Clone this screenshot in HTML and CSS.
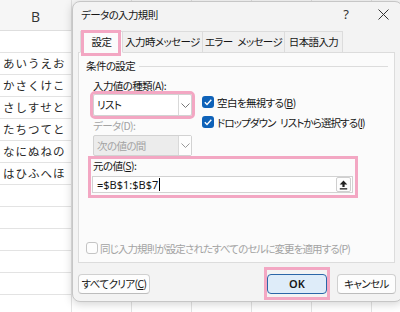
FILE: index.html
```html
<!DOCTYPE html>
<html lang="ja">
<head>
<meta charset="utf-8">
<title>データの入力規則</title>
<link rel="stylesheet" href="styles.css">
</head>
<body>
<div class="sheet">
  <div class="row head"><div class="cell colb">B</div><div class="cell"></div><div class="cell"></div><div class="cell"></div><div class="cell"></div><div class="cell"></div><div class="cell"></div></div>
  <div class="row"><div class="cell colb"></div><div class="cell"></div><div class="cell"></div><div class="cell"></div><div class="cell"></div><div class="cell"></div><div class="cell"></div></div>
  <div class="row"><div class="cell colb">あいうえお</div><div class="cell"></div><div class="cell"></div><div class="cell"></div><div class="cell"></div><div class="cell"></div><div class="cell"></div></div>
  <div class="row"><div class="cell colb">かさくけこ</div><div class="cell"></div><div class="cell"></div><div class="cell"></div><div class="cell"></div><div class="cell"></div><div class="cell"></div></div>
  <div class="row"><div class="cell colb">さしすせと</div><div class="cell"></div><div class="cell"></div><div class="cell"></div><div class="cell"></div><div class="cell"></div><div class="cell"></div></div>
  <div class="row"><div class="cell colb">たちつてと</div><div class="cell"></div><div class="cell"></div><div class="cell"></div><div class="cell"></div><div class="cell"></div><div class="cell"></div></div>
  <div class="row"><div class="cell colb">なにぬねの</div><div class="cell"></div><div class="cell"></div><div class="cell"></div><div class="cell"></div><div class="cell"></div><div class="cell"></div></div>
  <div class="row"><div class="cell colb">はひふへほ</div><div class="cell"></div><div class="cell"></div><div class="cell"></div><div class="cell"></div><div class="cell"></div><div class="cell"></div></div>
  <div class="row"><div class="cell colb"></div><div class="cell"></div><div class="cell"></div><div class="cell"></div><div class="cell"></div><div class="cell"></div><div class="cell"></div></div>
  <div class="row"><div class="cell colb"></div><div class="cell"></div><div class="cell"></div><div class="cell"></div><div class="cell"></div><div class="cell"></div><div class="cell"></div></div>
  <div class="row"><div class="cell colb"></div><div class="cell"></div><div class="cell"></div><div class="cell"></div><div class="cell"></div><div class="cell"></div><div class="cell"></div></div>
  <div class="row"><div class="cell colb"></div><div class="cell"></div><div class="cell"></div><div class="cell"></div><div class="cell"></div><div class="cell"></div><div class="cell"></div></div>
  <div class="row"><div class="cell colb"></div><div class="cell"></div><div class="cell"></div><div class="cell"></div><div class="cell"></div><div class="cell"></div><div class="cell"></div></div>
  <div class="row"><div class="cell colb"></div><div class="cell"></div><div class="cell"></div><div class="cell"></div><div class="cell"></div><div class="cell"></div><div class="cell"></div></div>
</div>

<div class="dialog">
  <div class="titlebar">
    <span class="title">データの入力規則</span>
    <span class="help">?</span>
    <span class="close"><svg width="11" height="11" viewBox="0 0 11 11"><path d="M0.5 0.5 L10.5 10.5 M10.5 0.5 L0.5 10.5" stroke="#333" stroke-width="1" fill="none"/></svg></span>
  </div>
  <div class="tabs">
    <div class="tab active tab-settings">設定</div>
    <div class="tab tab-input">入力時メッセージ</div>
    <div class="tab tab-error">エラー メッセージ</div>
    <div class="tab tab-ime">日本語入力</div>
  </div>
  <div class="panel">
    <div class="group"><span class="group-label">条件の設定</span><span class="group-line"></span></div>
    <div class="fields">
      <div class="left">
        <div class="label">入力値の種類(<u>A</u>):</div>
        <div class="combo marked"><span class="combo-text">リスト</span><span class="combo-arrow"><svg width="9" height="5" viewBox="0 0 9 5"><path d="M0.5 0.5 L4.5 4.5 L8.5 0.5" fill="none" stroke="#777" stroke-width="1"/></svg></span></div>
        <div class="label disabled-text">データ(D):</div>
        <div class="combo disabled"><span class="combo-text">次の値の間</span><span class="combo-arrow"><svg width="9" height="5" viewBox="0 0 9 5"><path d="M0.5 0.5 L4.5 4.5 L8.5 0.5" fill="none" stroke="#999" stroke-width="1"/></svg></span></div>
      </div>
      <div class="right">
        <div class="chk"><span class="box checked"><svg width="12" height="12" viewBox="0 0 12 12"><path d="M2.8 6.2 L5 8.4 L9.3 3.8" fill="none" stroke="#fff" stroke-width="1.4"/></svg></span><span>空白を無視する(<u>B</u>)</span></div>
        <div class="chk"><span class="box checked"><svg width="12" height="12" viewBox="0 0 12 12"><path d="M2.8 6.2 L5 8.4 L9.3 3.8" fill="none" stroke="#fff" stroke-width="1.4"/></svg></span><span class="kana">ドロップダウン リストから選択する(<u>I</u>)</span></div>
      </div>
    </div>
    <div class="source">
      <div class="label">元の値(<u>S</u>):</div>
      <div class="input"><span class="input-text">=$B$1:$B$7</span><span class="caret"></span><span class="range-btn"><svg width="9" height="10" viewBox="0 0 9 10"><path d="M4.5 0.5 L8.3 4.5 H5.6 V7 H3.4 V4.5 H0.7 Z" fill="#222"/><rect x="0.8" y="8.2" width="7.4" height="1.3" fill="#222"/></svg></span></div>
    </div>
    <div class="spacer"></div>
    <div class="chk apply disabled-text"><span class="box empty"></span><span class="kana">同じ入力規則が設定されたすべてのセルに変更を適用する(P)</span></div>
  </div>
  <div class="buttons">
    <button class="btn clear">すべてクリア(<u>C</u>)</button>
    <span class="spacer"></span>
    <span class="ok-mark"><button class="btn ok">OK</button></span>
    <button class="btn cancel">キャンセル</button>
  </div>
</div>
</body>
</html>
```

FILE: styles.css
```css
* { box-sizing: border-box; }

body {
  margin: 0;
  width: 400px;
  height: 312px;
  overflow: hidden;
  position: relative;
  background: #ffffff;
  font-family: "Noto Sans CJK JP", "Noto Sans", sans-serif;
  color: #161616;
}

/* spreadsheet */
.sheet { display: flex; flex-direction: column; }
.row {
  display: flex;
  height: 22px;
  border-bottom: 1px solid #e3e3e3;
  flex: none;
}
.row.head {
  height: 31px;
  background: #f6f6f6;
  border-bottom: 1px solid #dedede;
}
.cell {
  width: 60px;
  flex: none;
  border-right: 1px solid #e3e3e3;
  font-size: 11.5px;
  letter-spacing: 1px;
  line-height: 21px;
  padding-left: 3px;
  color: #2a2a2a;
  white-space: nowrap;
}
.cell.colb { width: 72px; }
.head .cell {
  border-right-color: #dedede;
  text-align: center;
  font-family: "Open Sans", "Noto Sans", sans-serif;
  font-size: 14px;
  letter-spacing: 0;
  line-height: 22px;
  padding: 6px 0 0 0;
  color: #333;
}

/* dialog */
.dialog {
  position: absolute;
  left: 72px;
  top: 1px;
  width: 331px;
  height: 301px;
  background: #f3f3f3;
  border: 1px solid #c6c6c6;
  border-radius: 8px;
  box-shadow: 0 2px 10px rgba(0,0,0,0.18);
  display: flex;
  flex-direction: column;
  font-size: 10.5px;
  letter-spacing: -0.6px;
  word-spacing: 3px;
  font-feature-settings: "palt";
}

.titlebar {
  display: flex;
  align-items: center;
  height: 24px;
  padding-left: 8px;
  flex: none;
}
.title { flex: 1; }
.help {
  width: 36px;
  text-align: center;
  font-family: "Noto Sans", sans-serif;
  font-size: 13px;
  letter-spacing: 0;
  color: #333;
}
.close {
  width: 38px;
  display: flex;
  justify-content: center;
  align-items: center;
}

.tabs {
  display: flex;
  margin: 5px 0 -1px 7px;
  position: relative;
  z-index: 1;
  flex: none;
}
.tab {
  height: 22px;
  line-height: 20px;
  text-align: center;
  border: 1px solid #dcdcdc;
  border-left: none;
  background: #f0f0f0;
  white-space: nowrap;
}
.tab:first-child { border-left: 1px solid #dcdcdc; }
.tab-settings { width: 43px; }
.tab-input { width: 80px; }
.tab-error { width: 82px; }
.tab-ime { width: 58px; }
.tab.active {
  position: relative;
  background: #fbfbfb;
  border-bottom-color: #fbfbfb;
}
.tab.active::after {
  content: "";
  position: absolute;
  left: 0;
  right: 1px;
  top: -2px;
  bottom: -4px;
  border: 3px solid #f3a7c3;
}

.panel {
  margin: 0 7px 0 5px;
  height: 211px;
  background: #fbfbfb;
  border: 1px solid #dcdcdc;
  display: flex;
  flex-direction: column;
  flex: none;
}

.group {
  display: flex;
  align-items: center;
  margin: 5px 6px 0 7px;
  height: 16px;
}
.group-label { line-height: 16px; }
.group-line { flex: 1; height: 1px; background: #dcdcdc; margin-left: 4px; }

.fields {
  display: flex;
  padding-left: 14px;
  margin-top: 4px;
}
.left { width: 99px; flex: none; display: flex; flex-direction: column; }
.label { line-height: 16px; white-space: nowrap; }
.disabled-text { color: #a3a3a3; }

.combo {
  display: flex;
  height: 22px;
  border: 1px solid #d2d2d2;
  border-radius: 2px;
  background: #ffffff;
}
.combo.marked { outline: 3px solid #f3a7c3; outline-offset: 0; }
.combo-text { flex: 1; line-height: 20px; padding-left: 3px; }
.combo-arrow {
  width: 13px;
  border-left: 1px solid #d9d9d9;
  display: flex;
  align-items: center;
  justify-content: center;
}
.combo.disabled {
  height: 21px;
  margin-top: 1px;
  background: #ececec;
  color: #a3a3a3;
}
.combo.disabled .combo-arrow { background: #fdfdfd; }
.left .label.disabled-text { margin-top: 2px; }

.right {
  display: flex;
  flex-direction: column;
  padding-top: 14px;
  margin-left: 10px;
}
.chk {
  display: flex;
  align-items: center;
  height: 20px;
  white-space: nowrap;
}
.kana { letter-spacing: -0.9px; }
.box {
  width: 12px;
  height: 12px;
  border-radius: 3px;
  margin-right: 3px;
  flex: none;
  display: flex;
}
.box.checked { background: #0f62b8; }
.box.empty { border: 1px solid #c4c4c4; background: #fdfdfd; }

.source {
  margin: 0 0 0 9px;
  width: 270px;
  border: 3px solid #f3a7c3;
  padding: 0 2px 2px 1px;
}
.source .label { line-height: 14px; margin-left: 1px; }
.input {
  margin-top: 3px;
  height: 17px;
  border: 1px solid #d2d2d2;
  background: #ffffff;
  display: flex;
  align-items: center;
  padding-left: 4px;
}
.input-text { font-family: "Noto Sans", sans-serif; font-size: 11px; letter-spacing: 0; }
.caret { width: 1px; height: 13px; background: #000; margin-left: 1px; }
.range-btn {
  margin-left: auto;
  margin-right: 1px;
  width: 15px;
  height: 15px;
  border: 1px solid #cfcfcf;
  border-radius: 2px;
  background: #fdfdfd;
  display: flex;
  align-items: center;
  justify-content: center;
}

.spacer { flex: 1; }
.chk.apply { margin: 0 0 6px 7px; height: 16px; }
.chk.apply .box { margin-right: 2px; }

.buttons {
  display: flex;
  align-items: center;
  margin: 4px 6px 0 5px;
  height: 33px;
}
.btn {
  font-family: inherit;
  font-size: 10.5px;
  letter-spacing: -0.6px;
  font-feature-settings: "palt";
  white-space: nowrap;
  height: 20px;
  padding: 0;
  border: 1px solid #d0d0d0;
  border-bottom-color: #bdbdbd;
  border-radius: 4px;
  background: #fdfdfd;
  color: #161616;
  line-height: 18px;
}
.btn.clear { width: 72px; }
.ok-mark {
  border: 3px solid #f3a7c3;
  padding: 4px 0 3px 0;
  display: flex;
}
.btn.ok {
  width: 60px;
  background: #deecf9;
  border: 1px solid #2b66a8;
  font-family: "Noto Sans", sans-serif;
  font-size: 11px;
  letter-spacing: 0;
  font-weight: 600;
}
.btn.cancel { width: 59px; margin-left: 7px; }
```
